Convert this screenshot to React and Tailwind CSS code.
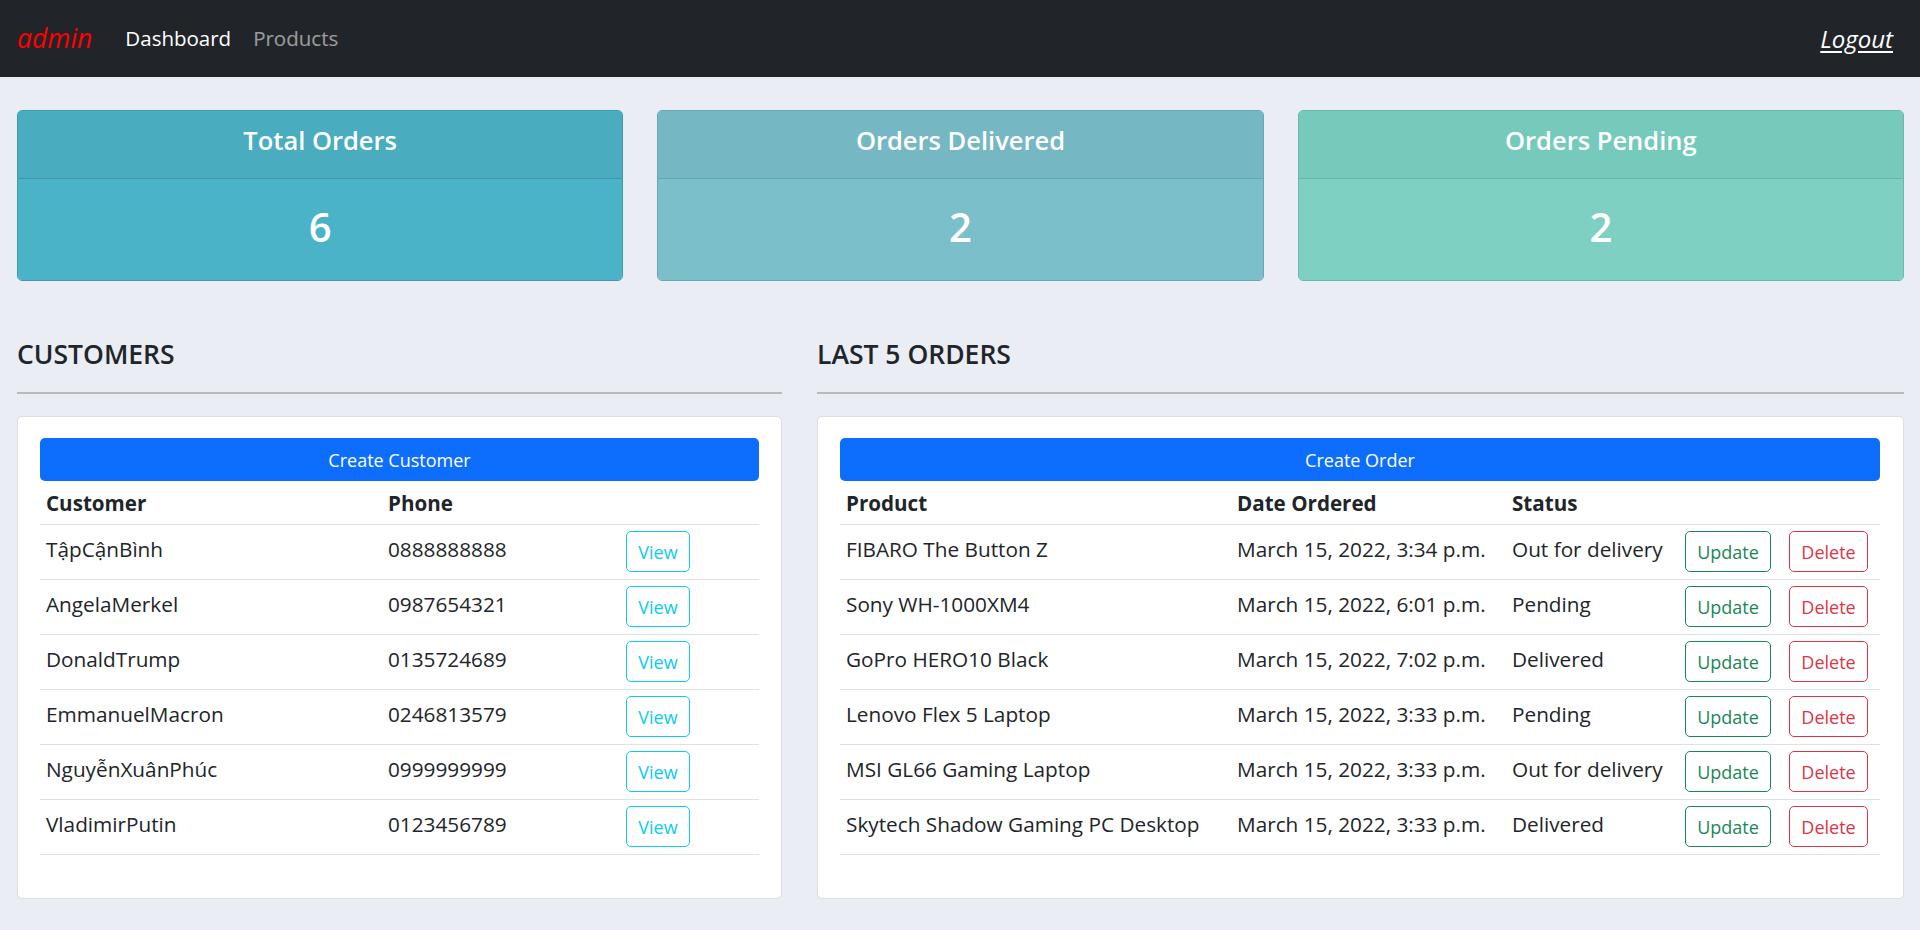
import React from "react";

const customers = [
  ["TậpCậnBình", "0888888888"],
  ["AngelaMerkel", "0987654321"],
  ["DonaldTrump", "0135724689"],
  ["EmmanuelMacron", "0246813579"],
  ["NguyễnXuânPhúc", "0999999999"],
  ["VladimirPutin", "0123456789"],
];

const orders = [
  ["FIBARO The Button Z", "March 15, 2022, 3:34 p.m.", "Out for delivery"],
  ["Sony WH-1000XM4", "March 15, 2022, 6:01 p.m.", "Pending"],
  ["GoPro HERO10 Black", "March 15, 2022, 7:02 p.m.", "Delivered"],
  ["Lenovo Flex 5 Laptop", "March 15, 2022, 3:33 p.m.", "Pending"],
  ["MSI GL66 Gaming Laptop", "March 15, 2022, 3:33 p.m.", "Out for delivery"],
  ["Skytech Shadow Gaming PC Desktop", "March 15, 2022, 3:33 p.m.", "Delivered"],
];

function StatCard({ title, value, border, head, body, line }) {
  return (
    <div className={`rounded-[5px] border overflow-hidden ${border}`}>
      <div className={`h-[68px] flex items-center justify-center pb-[10px] border-b ${head} ${line}`}>
        <h3 className="text-[25.5px] font-semibold text-white leading-[34px]">{title}</h3>
      </div>
      <div className={`h-[101px] flex items-center justify-center pb-[6px] ${body}`}>
        <span className="text-[40px] font-semibold text-white leading-[48px]">{value}</span>
      </div>
    </div>
  );
}

function SectionTitle({ children }) {
  return (
    <div>
      <h2 className="mt-[57px] text-[26.5px] font-semibold leading-[32px] text-[#212529]">{children}</h2>
      <div className="mt-[22px] h-[2px] bg-[#b8babf]" />
    </div>
  );
}

export default function App() {
  return (
    <div className="min-h-[930px] bg-[#eaedf4] font-['Open_Sans',sans-serif] text-[#212529]">
      <nav className="h-[77px] bg-[#212529] flex items-center pl-[17px] pr-[27px]">
        <span className="text-[26.5px] italic text-[#ff0000] leading-none">admin</span>
        <a className="ml-[33px] text-[20.5px] text-white leading-none">Dashboard</a>
        <a className="ml-[22px] text-[20.5px] text-white/55 leading-none">Products</a>
        <a className="ml-auto text-[24px] italic underline underline-offset-[3px] text-white leading-none">Logout</a>
      </nav>

      <div className="pl-[17px] pr-[16px] pb-[30px]">
        <div className="grid grid-cols-3 gap-[34px] pt-[33px]">
          <StatCard title="Total Orders" value="6" border="border-[#3f9cb0]" head="bg-[#49acbf]" body="bg-[#4bb3c7]" line="border-[#3f98ab]" />
          <StatCard title="Orders Delivered" value="2" border="border-[#69a6b3]" head="bg-[#76b7c4]" body="bg-[#7bbfcb]" line="border-[#6aa6b2]" />
          <StatCard title="Orders Pending" value="2" border="border-[#69b8a9]" head="bg-[#76cabb]" body="bg-[#7dd0c2]" line="border-[#69b5a8]" />
        </div>

        <div className="grid grid-cols-[765px_1fr] gap-[35px]">
          <div>
            <SectionTitle>CUSTOMERS</SectionTitle>
            <div className="mt-[22px] bg-white border border-[#dcdde0] rounded-[5px] px-[22px] pt-[21px] pb-[43px]">
              <button className="w-full h-[43px] rounded-[5px] bg-[#0d6efd] text-white text-[18px] leading-none">Create Customer</button>
              <div className="grid grid-cols-[342px_238px_140px] h-[44px] items-center pt-[1px] border-b border-[#dee2e6] text-[20.6px] font-bold">
                <div className="pl-[6px]">Customer</div>
                <div className="pl-[6px]">Phone</div>
                <div />
              </div>
              {customers.map(([name, phone]) => (
                <div key={name} className="grid grid-cols-[342px_238px_140px] h-[55px] border-b border-[#dee2e6] text-[20.75px]">
                  <div className="pl-[6px] pt-[9px] leading-[30px]">{name}</div>
                  <div className="pl-[6px] pt-[9px] leading-[30px]">{phone}</div>
                  <div className="pl-[6px] pt-[6px]">
                    <button className="w-[64px] h-[41px] rounded-[5px] border border-[#0dcaf0] text-[#0dcaf0] text-[18px] leading-none">View</button>
                  </div>
                </div>
              ))}
            </div>
          </div>

          <div>
            <SectionTitle>LAST 5 ORDERS</SectionTitle>
            <div className="mt-[22px] bg-white border border-[#dcdde0] rounded-[5px] pl-[22px] pr-[23px] pt-[21px] pb-[43px]">
              <button className="w-full h-[43px] rounded-[5px] bg-[#0d6efd] text-white text-[18px] leading-none">Create Order</button>
              <div className="grid grid-cols-[391px_275px_173px_104px_97px] h-[44px] items-center pt-[1px] border-b border-[#dee2e6] text-[20.6px] font-bold">
                <div className="pl-[6px]">Product</div>
                <div className="pl-[6px]">Date Ordered</div>
                <div className="pl-[6px]">Status</div>
                <div />
                <div />
              </div>
              {orders.map(([p, d, s]) => (
                <div key={p} className="grid grid-cols-[391px_275px_173px_104px_97px] h-[55px] border-b border-[#dee2e6] text-[20.75px]">
                  <div className="pl-[6px] pt-[9px] leading-[30px] whitespace-nowrap">{p}</div>
                  <div className="pl-[6px] pt-[9px] leading-[30px] whitespace-nowrap">{d}</div>
                  <div className="pl-[6px] pt-[9px] leading-[30px] whitespace-nowrap">{s}</div>
                  <div className="pl-[6px] pt-[6px]">
                    <button className="w-[86px] h-[41px] rounded-[5px] border border-[#198754] text-[#198754] text-[18px] leading-none">Update</button>
                  </div>
                  <div className="pl-[6px] pt-[6px]">
                    <button className="w-[79px] h-[41px] rounded-[5px] border border-[#dc3545] text-[#dc3545] text-[18px] leading-none">Delete</button>
                  </div>
                </div>
              ))}
            </div>
          </div>
        </div>
      </div>
    </div>
  );
}
